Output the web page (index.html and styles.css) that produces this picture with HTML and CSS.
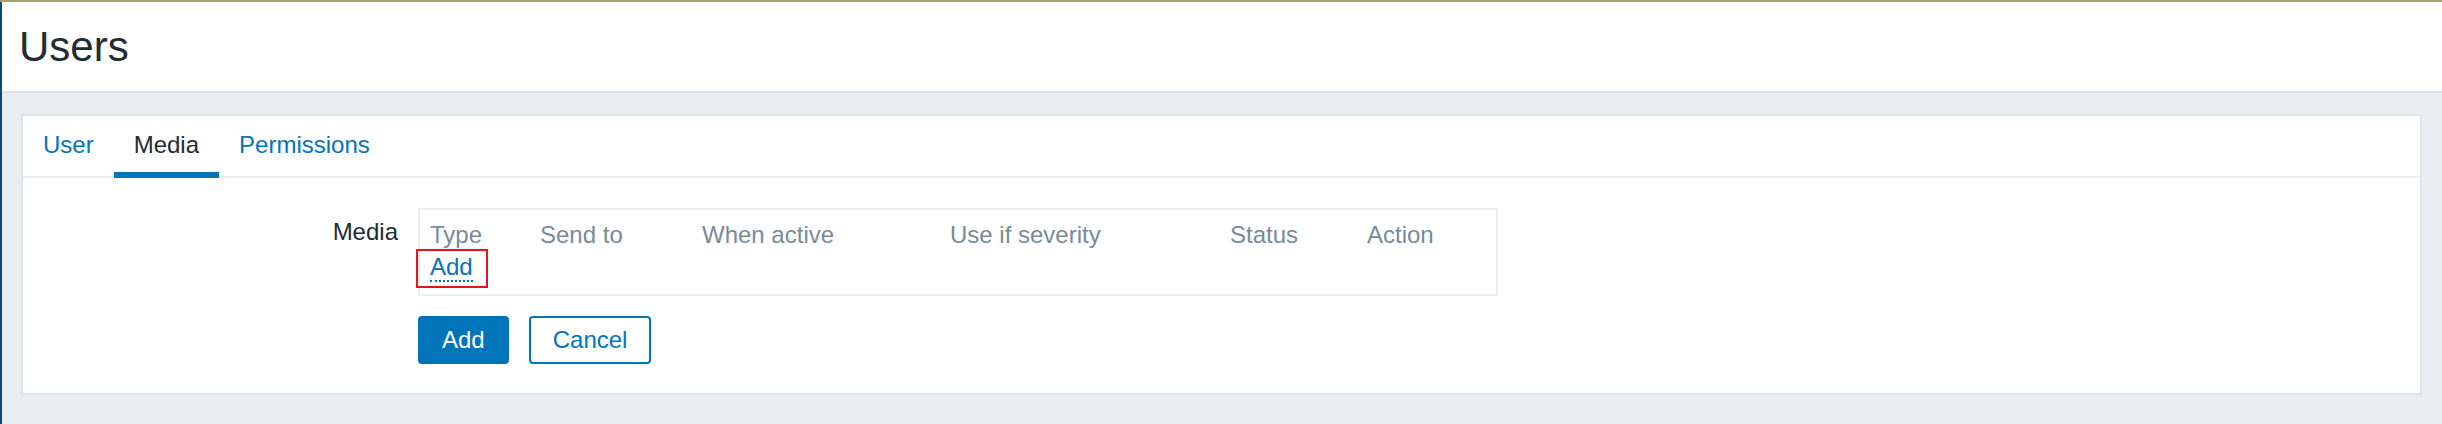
FILE: index.html
```html
<!DOCTYPE html>
<html lang="en">
<head>
<meta charset="utf-8">
<title>Users</title>
<link rel="stylesheet" href="styles.css">
</head>
<body>
<div class="page">
  <header class="page-header">
    <h1 class="page-title">Users</h1>
  </header>
  <main class="content">
    <section class="panel">
      <ul class="tabs">
        <li><a class="tab" href="#">User</a></li>
        <li><a class="tab tab-active" href="#">Media</a></li>
        <li><a class="tab" href="#">Permissions</a></li>
      </ul>
      <div class="form">
        <div class="form-row">
          <label class="form-label">Media</label>
          <div class="form-field">
            <div class="media-box">
              <table class="media-table">
                <colgroup>
                  <col class="col-type">
                  <col class="col-send">
                  <col class="col-when">
                  <col class="col-sev">
                  <col class="col-status">
                  <col class="col-action">
                </colgroup>
                <thead>
                  <tr>
                    <th>Type</th>
                    <th>Send to</th>
                    <th>When active</th>
                    <th>Use if severity</th>
                    <th>Status</th>
                    <th>Action</th>
                  </tr>
                </thead>
                <tbody>
                  <tr>
                    <td colspan="6"><a class="link-add" href="#">Add</a></td>
                  </tr>
                </tbody>
              </table>
            </div>
          </div>
        </div>
        <div class="form-row">
          <div class="form-label"></div>
          <div class="form-field actions">
            <button class="btn btn-primary" type="button">Add</button>
            <button class="btn btn-secondary" type="button">Cancel</button>
          </div>
        </div>
      </div>
    </section>
  </main>
</div>
</body>
</html>
```

FILE: styles.css
```css
html, body {
  margin: 0;
  padding: 0;
}

body {
  font-family: "Liberation Sans", Arial, sans-serif;
  font-size: 24px;
  color: #1f2c33;
  background: #ebeef0;
  border-top: 2px solid #a9a16a;
}

.page {
  border-left: 2px solid #0b4a6e;
  min-height: 422px;
  box-sizing: border-box;
}

.page-header {
  background: #ffffff;
  height: 91px;
  box-sizing: border-box;
  padding: 21px 16px 0 17px;
  border-bottom: 2px solid #dce2e5;
}

.page-title {
  margin: 0;
  font-size: 42px;
  font-weight: normal;
  line-height: 48px;
  color: #1f2c33;
}

.content {
  padding: 21px 20px 29px 19px;
}

.panel {
  background: #ffffff;
  border: 2px solid #dfe4e7;
}

.tabs {
  list-style: none;
  margin: 0;
  padding: 0;
  display: flex;
  border-bottom: 2px solid #ebeef0;
}

.tab {
  display: block;
  padding: 15px 20px 13px;
  line-height: 28px;
  border-bottom: 6px solid transparent;
  margin-bottom: -2px;
  color: #0275b8;
  text-decoration: none;
}

.tab-active {
  color: #1f2c33;
  border-bottom-color: #0275b8;
}

.form {
  padding: 30px 0 29px;
}

.form-row {
  display: flex;
  align-items: flex-start;
}

.form-row + .form-row {
  margin-top: 20px;
}

.form-label {
  width: 375px;
  padding: 10px 20px 0 0;
  line-height: 28px;
  text-align: right;
  color: #1f2c33;
  flex: none;
}

.media-box {
  width: 1080px;
  box-sizing: border-box;
  border: 2px solid #ebeef0;
}

.media-table {
  width: 100%;
  border-collapse: collapse;
  table-layout: fixed;
}

.col-type { width: 110px; }
.col-send { width: 162px; }
.col-when { width: 248px; }
.col-sev { width: 280px; }
.col-status { width: 137px; }

.media-table th {
  font-weight: normal;
  text-align: left;
  color: #768c98;
  line-height: 28px;
  padding: 11px 10px 4px;
  white-space: nowrap;
}

.media-table td {
  line-height: 28px;
  padding: 0 10px 13px;
}

.link-add {
  position: relative;
  color: #0275b8;
  text-decoration: none;
  border-bottom: 2px dotted #0275b8;
}

.link-add::after {
  content: "";
  position: absolute;
  left: -14px;
  right: -15px;
  top: -4px;
  bottom: -8px;
  border: 2px solid #e3151b;
}

.actions {
  display: flex;
  gap: 20px;
}

.btn {
  height: 48px;
  padding: 0 22px;
  border: 2px solid #0275b8;
  border-radius: 4px;
  font-family: "Liberation Sans", Arial, sans-serif;
  font-size: 24px;
  line-height: 44px;
  cursor: pointer;
}

.btn-primary {
  background: #0275b8;
  color: #ffffff;
}

.btn-secondary {
  background: #ffffff;
  color: #0275b8;
}
```
